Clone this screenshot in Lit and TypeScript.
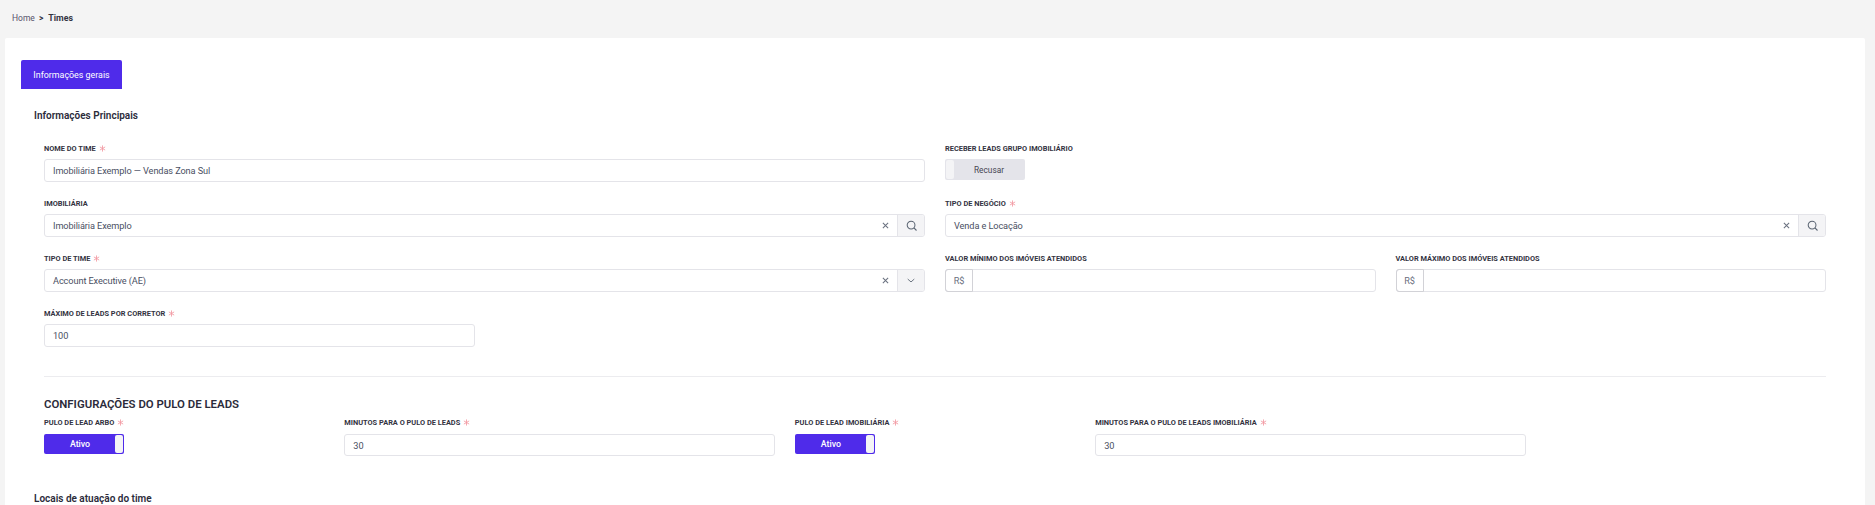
import { LitElement, html, css, svg } from "lit";
import { customElement } from "lit/decorators.js";

const star = html`<svg class="star" viewBox="0 0 8 8" width="7" height="7">
  <path d="M4 .5v7M1 2.2l6 3.6M7 2.2L1 5.8" stroke="#f29aa3" stroke-width="1" fill="none" />
</svg>`;

const closeIcon = svg`<path d="M1 1l6 6M7 1L1 7" stroke="#6b7280" stroke-width="1.2" fill="none" />`;
const searchIcon = svg`<circle cx="6" cy="6" r="4.6" stroke="#5a6472" stroke-width="1.2" fill="none" /><path d="M9.4 9.4l3 3" stroke="#5a6472" stroke-width="1.3" fill="none" />`;
const chevronIcon = svg`<path d="M1 1l4.5 4L10 1" stroke="#5a6472" stroke-width="1.2" fill="none" />`;

@customElement("app-root")
export class AppRoot extends LitElement {
  static styles = css`
    :host {
      display: block;
      height: 505px;
      overflow: hidden;
      background: #f4f4f4;
      font-family: Roboto, "Liberation Sans", sans-serif;
      color: #2b2b3a;
    }
    .crumbs {
      display: flex;
      align-items: center;
      height: 38px;
      padding: 0 0 2px 12px;
      box-sizing: border-box;
      font-size: 8.5px;
      color: #57536b;
    }
    .crumbs .sep {
      font-weight: 700;
      color: #2b2b3a;
      margin: 0 5px 0 4px;
    }
    .crumbs b {
      font-size: 8.8px;
      font-weight: 700;
      color: #33333f;
    }
    .card {
      margin: 0 10px 0 5px;
      padding: 22px 39px 0 16px;
      background: #fff;
      border-radius: 2px 2px 0 0;
      height: 467px;
      box-sizing: border-box;
    }
    .tab {
      display: flex;
      align-items: center;
      justify-content: center;
      width: 101px;
      height: 29px;
      background: #4f2bea;
      color: #fff;
      font-size: 8.9px;
      border-radius: 2px 2px 0 0;
    }
    .title {
      margin: 20px 0 0 13px;
      font-size: 10px;
      line-height: 14px;
      font-weight: 600;
      color: #2b2b3a;
    }
    .section {
      margin-left: 23px;
    }
    .grid {
      display: grid;
      grid-template-columns: repeat(12, 1fr);
      column-gap: 20px;
    }
    .main {
      margin-top: 18px;
      row-gap: 14px;
    }
    .half { grid-column: span 6; }
    .quarter { grid-column: span 3; }
    .span2 { grid-column: span 2; }
    .span3 { grid-column: span 3; }
    .label {
      display: flex;
      align-items: center;
      gap: 3px;
      height: 14px;
      margin-bottom: 4px;
      font-size: 7.4px;
      font-weight: 700;
      text-transform: uppercase;
      color: #33333f;
      white-space: nowrap;
    }
    .star { flex: none; }
    .input {
      display: flex;
      align-items: stretch;
      height: 23px;
      box-sizing: border-box;
      border: 1px solid #e4e4e9;
      border-radius: 3px;
      background: #fff;
      font-size: 9.2px;
      letter-spacing: -0.1px;
      color: #4a4f63;
    }
    .value {
      flex: 1;
      display: flex;
      align-items: center;
      padding: 0 8px;
      white-space: nowrap;
    }
    .clear {
      display: flex;
      align-items: center;
      justify-content: center;
      width: 24px;
    }
    .addon {
      display: flex;
      align-items: center;
      justify-content: center;
      width: 26px;
      background: #f4f4f6;
      border-left: 1px solid #e4e4e9;
      border-radius: 0 2px 2px 0;
    }
    .prefix {
      display: flex;
      align-items: center;
      justify-content: center;
      width: 28px;
      margin: -1px 0 -1px -1px;
      border: 1px solid #d2d2d7;
      border-radius: 3px 0 0 3px;
      color: #6b7080;
      box-sizing: border-box;
    }
    .toggle {
      display: flex;
      align-items: center;
      width: 80px;
      height: 21px;
      padding: 1px;
      box-sizing: border-box;
      border-radius: 2px;
      font-size: 8.3px;
      font-weight: 500;
    }
    .toggle span { flex: 1; text-align: center; }
    .toggle i {
      display: block;
      width: 8px;
      height: 100%;
      border-radius: 2px;
      background: #f4f4f6;
    }
    .toggle.on {
      height: 20px;
      background: #4f2bea;
      color: #fff;
      font-size: 8.8px;
    }
    .toggle.off {
      background: #e4e4ea;
      color: #444452;
      font-weight: 400;
    }
    hr {
      margin: 29px 0 0;
      border: 0;
      border-top: 1px solid #ececef;
    }
    .subtitle {
      margin: 19px 0 3px;
      font-size: 11.4px;
      line-height: 16px;
      font-weight: 600;
      color: #2b2b3a;
    }
    .jump .label { margin-bottom: 5px; }
    .jump .input { height: 22px; }
    .title.locals { margin-top: 36px; }
  `;

  private field(name: string, required: boolean, body: unknown, cls: string) {
    return html`<div class=${cls}>
      <div class="label">${name}${required ? star : ""}</div>
      ${body}
    </div>`;
  }

  private plain(value: string) {
    return html`<div class="input"><div class="value">${value}</div></div>`;
  }

  private picker(value: string, icon: "search" | "chevron") {
    return html`<div class="input">
      <div class="value">${value}</div>
      <div class="clear"><svg width="7" height="7" viewBox="0 0 8 8">${closeIcon}</svg></div>
      <div class="addon">
        ${icon === "search"
          ? html`<svg width="11" height="11" viewBox="0 0 13 13">${searchIcon}</svg>`
          : html`<svg width="8" height="5" viewBox="0 0 11 6">${chevronIcon}</svg>`}
      </div>
    </div>`;
  }

  private money() {
    return html`<div class="input"><div class="prefix">R$</div><div class="value"></div></div>`;
  }

  private toggle(on: boolean) {
    return on
      ? html`<div class="toggle on"><span>Ativo</span><i></i></div>`
      : html`<div class="toggle off"><i></i><span>Recusar</span></div>`;
  }

  render() {
    return html`
      <nav class="crumbs"><span>Home</span><span class="sep">&gt;</span><b>Times</b></nav>
      <main class="card">
        <div class="tab">Informações gerais</div>
        <h2 class="title">Informações Principais</h2>
        <div class="section">
          <div class="grid main">
            ${this.field("Nome do time", true, this.plain("Imobiliária Exemplo — Vendas Zona Sul"), "half")}
            ${this.field("Receber leads grupo imobiliário", false, this.toggle(false), "half")}
            ${this.field("Imobiliária", false, this.picker("Imobiliária Exemplo", "search"), "half")}
            ${this.field("Tipo de negócio", true, this.picker("Venda e Locação", "search"), "half")}
            ${this.field("Tipo de time", true, this.picker("Account Executive (AE)", "chevron"), "half")}
            ${this.field("Valor mínimo dos imóveis atendidos", false, this.money(), "quarter")}
            ${this.field("Valor máximo dos imóveis atendidos", false, this.money(), "quarter")}
            ${this.field("Máximo de leads por corretor", true, this.plain("100"), "quarter")}
          </div>
          <hr />
          <h3 class="subtitle">CONFIGURAÇÕES DO PULO DE LEADS</h3>
          <div class="grid jump">
            ${this.field("Pulo de lead Arbo", true, this.toggle(true), "span2")}
            ${this.field("Minutos para o pulo de leads", true, this.plain("30"), "span3")}
            ${this.field("Pulo de lead imobiliária", true, this.toggle(true), "span2")}
            ${this.field("Minutos para o pulo de leads imobiliária", true, this.plain("30"), "span3")}
          </div>
        </div>
        <h2 class="title locals">Locais de atuação do time</h2>
      </main>
    `;
  }
}
